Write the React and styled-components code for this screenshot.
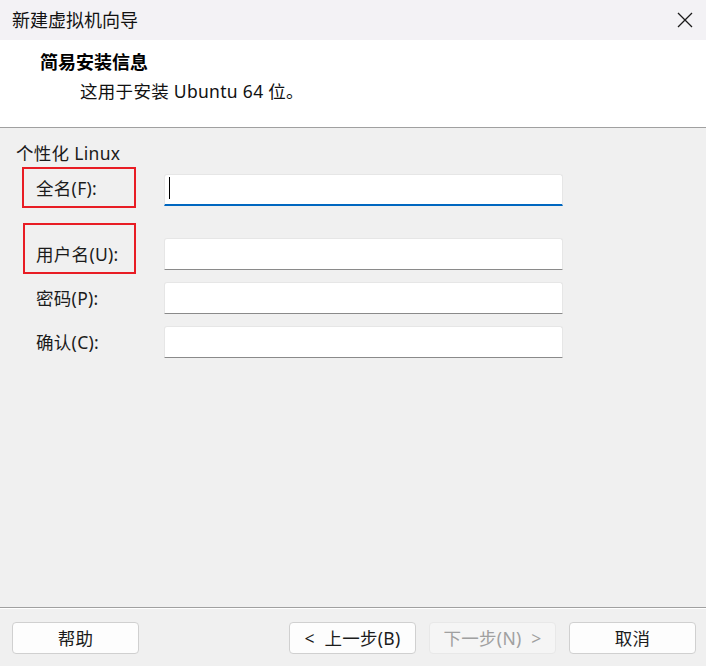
import React from 'react';
import styled, { createGlobalStyle } from 'styled-components';

const GlobalStyle = createGlobalStyle`
  body {
    margin: 0;
    font-family: "Noto Sans", "Noto Sans CJK SC", sans-serif;
    color: #1b1b1b;
  }
`;

const Window = styled.div`
  width: 706px;
  height: 666px;
  display: flex;
  flex-direction: column;
  background: #f0f0f0;
  overflow: hidden;
`;

const TitleBar = styled.div`
  height: 40px;
  flex: none;
  display: flex;
  align-items: center;
  justify-content: space-between;
  background: #f3f2f5;
  padding: 0 13px 0 12px;
  font-size: 18px;
  line-height: 24px;
  color: #111;
`;

const CloseButton = styled.div`
  width: 16px;
  height: 16px;
  display: flex;
  align-items: center;
  justify-content: center;
`;

const Header = styled.div`
  height: 88px;
  flex: none;
  background: #fff;
  border-bottom: 1px solid #a0a0a0;
  box-sizing: border-box;
  padding: 10px 0 0 40px;
`;

const HeaderTitle = styled.div`
  font-size: 18px;
  line-height: 24px;
  font-weight: 700;
  color: #000;
`;

const HeaderSub = styled.div`
  font-size: 17.5px;
  letter-spacing: 0.3px;
  line-height: 24px;
  margin: 5px 0 0 40px;
  color: #111;
`;

const Body = styled.div`
  flex: 1;
  position: relative;
  padding: 13px 0 0 16px;
  font-size: 17.5px;
  letter-spacing: 0.3px;
`;

const GroupTitle = styled.div`
  line-height: 24px;
  color: #1b1b1b;
`;

const Form = styled.div`
  display: flex;
  flex-direction: column;
  gap: 12px;
  margin-top: 9px;
`;

const Row = styled.div`
  display: flex;
  align-items: center;
  height: 32px;
  margin-top: ${(p) => p.$gap || 0}px;
`;

const Label = styled.div`
  width: 148px;
  padding-left: 20px;
  box-sizing: border-box;
  line-height: 24px;
  color: #1b1b1b;
  margin-top: ${(p) => p.$shift || 0}px;
`;

const Input = styled.div`
  width: 399px;
  height: 32px;
  box-sizing: border-box;
  background: #fff;
  border: 1px solid #e6e6e6;
  border-bottom: ${(p) => (p.$focused ? '2px solid #0067c0' : '1px solid #8a8a8a')};
  border-radius: 3px 3px 0 0;
  position: relative;
  padding: 2px 0 0 4px;
`;

const Caret = styled.div`
  width: 1px;
  height: 22px;
  background: #000;
`;

const Highlight = styled.div`
  position: absolute;
  left: ${(p) => p.$x}px;
  top: ${(p) => p.$y}px;
  width: ${(p) => p.$w}px;
  height: ${(p) => p.$h}px;
  border: 2px solid #e81c24;
  box-sizing: border-box;
`;

const Footer = styled.div`
  flex: none;
  height: 59px;
  box-sizing: border-box;
  border-top: 1px solid #a0a0a0;
  box-shadow: inset 0 1px 0 #fff;
  display: flex;
  align-items: flex-start;
  justify-content: space-between;
  padding: 14px 10px 0 12px;
`;

const ButtonGroup = styled.div`
  display: flex;
  gap: 13px;
`;

const Button = styled.div`
  width: 127px;
  height: 32px;
  box-sizing: border-box;
  border: 1px solid ${(p) => (p.$disabled ? '#e8e8e8' : '#d0d0d0')};
  border-radius: 4px;
  background: ${(p) => (p.$disabled ? '#f5f5f5' : '#fdfdfd')};
  color: ${(p) => (p.$disabled ? '#a0a0a0' : '#1b1b1b')};
  display: flex;
  align-items: center;
  justify-content: center;
  font-size: 17.5px;
  letter-spacing: 0.3px;
  line-height: 24px;
  white-space: pre;
`;

export default function App() {
  return (
    <Window>
      <GlobalStyle />
      <TitleBar>
        <span>新建虚拟机向导</span>
        <CloseButton>
          <svg width="16" height="16" viewBox="0 0 16 16">
            <path d="M1 1 L15 15 M15 1 L1 15" stroke="#1a1a1a" strokeWidth="1.3" fill="none" />
          </svg>
        </CloseButton>
      </TitleBar>
      <Header>
        <HeaderTitle>简易安装信息</HeaderTitle>
        <HeaderSub>这用于安装 Ubuntu 64 位。</HeaderSub>
      </Header>
      <Body>
        <GroupTitle>个性化 Linux</GroupTitle>
        <Form>
          <Row>
            <Label $shift={-4}>全名(F):</Label>
            <Input $focused>
              <Caret />
            </Input>
          </Row>
          <Row $gap={20}>
            <Label>用户名(U):</Label>
            <Input />
          </Row>
          <Row>
            <Label>密码(P):</Label>
            <Input />
          </Row>
          <Row>
            <Label>确认(C):</Label>
            <Input />
          </Row>
        </Form>
        <Highlight $x={22} $y={39} $w={114} $h={41} />
        <Highlight $x={23} $y={95} $w={113} $h={51} />
      </Body>
      <Footer>
        <Button>帮助</Button>
        <ButtonGroup>
          <Button>{'<  上一步(B)'}</Button>
          <Button $disabled>{'下一步(N)  >'}</Button>
          <Button>取消</Button>
        </ButtonGroup>
      </Footer>
    </Window>
  );
}
